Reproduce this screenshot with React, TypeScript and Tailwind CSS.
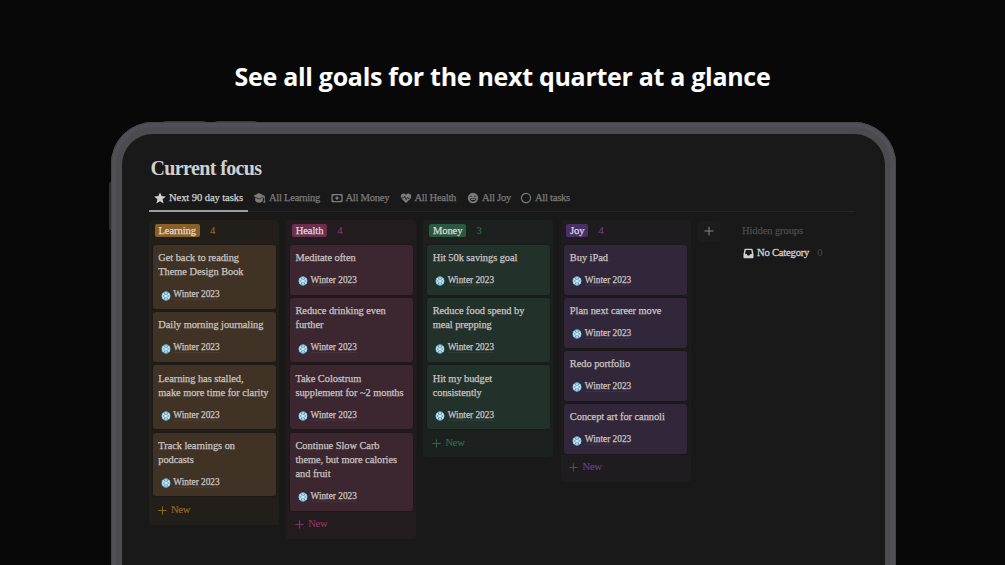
import React from 'react';
import { Plus } from 'lucide-react';

interface Task {
  lines: string[];
}

interface Column {
  name: string;
  count: number;
  tasks: Task[];
  panel: string;
  card: string;
  badge: string;
  accent: string;
}

const columns: Column[] = [
  {
    name: 'Learning',
    count: 4,
    panel: 'bg-[#221f1a]',
    card: 'bg-[#403325]',
    badge: 'bg-[#8a6029]',
    accent: 'text-[#8f6622]',
    tasks: [
      { lines: ['Get back to reading', 'Theme Design Book'] },
      { lines: ['Daily morning journaling'] },
      { lines: ['Learning has stalled,', 'make more time for clarity'] },
      { lines: ['Track learnings on', 'podcasts'] },
    ],
  },
  {
    name: 'Health',
    count: 4,
    panel: 'bg-[#231c1e]',
    card: 'bg-[#3c262f]',
    badge: 'bg-[#6d2f4e]',
    accent: 'text-[#85355f]',
    tasks: [
      { lines: ['Meditate often'] },
      { lines: ['Reduce drinking even', 'further'] },
      { lines: ['Take Colostrum', 'supplement for ~2 months'] },
      { lines: ['Continue Slow Carb', 'theme, but more calories', 'and fruit'] },
    ],
  },
  {
    name: 'Money',
    count: 3,
    panel: 'bg-[#1c201e]',
    card: 'bg-[#23312b]',
    badge: 'bg-[#2a593f]',
    accent: 'text-[#2c6b48]',
    tasks: [
      { lines: ['Hit 50k savings goal'] },
      { lines: ['Reduce food spend by', 'meal prepping'] },
      { lines: ['Hit my budget', 'consistently'] },
    ],
  },
  {
    name: 'Joy',
    count: 4,
    panel: 'bg-[#1f1c20]',
    card: 'bg-[#32273a]',
    badge: 'bg-[#4b2f68]',
    accent: 'text-[#643c87]',
    tasks: [
      { lines: ['Buy iPad'] },
      { lines: ['Plan next career move'] },
      { lines: ['Redo portfolio'] },
      { lines: ['Concept art for cannoli'] },
    ],
  },
];

const StarIcon = () => (
  <svg viewBox="0 0 12 12" className="h-3 w-3" fill="currentColor">
    <path d="M6 .4 7.600 4.100l4.200.4-3.200 2.800 1 4.200L6 9.300l-3.600 2.200 1-4.200L.2 4.500l4.200-.4Z" />
  </svg>
);

const CapIcon = () => (
  <svg viewBox="0 0 13 12" className="h-3 w-[13px]" fill="currentColor">
    <path d="M6 1 .4 3.900 6 6.800l4.400-2.200v.5L6 7.500 2.200 5.600v3.100C3 10 4.300 10.700 6 10.700S9 10 9.800 8.700V6.200L11 5.500v2.700c-.5.8-.6 1.600-.5 2.500h1.800c.1-.9 0-1.700-.5-2.500V3.900Z" />
  </svg>
);

const MoneyIcon = () => (
  <svg viewBox="0 0 12 12" className="h-3 w-3">
    <rect x="1" y="2.600" width="10" height="7" rx=".6" fill="none" stroke="currentColor" strokeWidth="1.300" />
    <circle cx="6" cy="6.100" r="1.600" fill="currentColor" />
    <path d="M1.500 3h1.700L1.500 4.700ZM10.500 3v1.700L8.800 3ZM1.500 9.200V7.500l1.700 1.700ZM10.500 9.200H8.800l1.700-1.700Z" fill="currentColor" />
  </svg>
);

const HeartIcon = () => (
  <svg viewBox="0 0 12 12" className="h-3 w-3">
    <path d="M6 11 1.600 6.700C.3 5.300.5 3.100 1.900 2.100 3.300 1.100 5 1.500 6 2.900c1-1.400 2.700-1.800 4.100-.8 1.400 1 1.600 3.200.3 4.600Z" fill="currentColor" />
    <path d="M1 6h2.500l1-1.900 1.600 3.600 1.300-2.400.6.900h1.600" fill="none" stroke="#191919" strokeWidth=".8" />
  </svg>
);

const SmileIcon = () => (
  <svg viewBox="0 0 12 12" className="h-3 w-3">
    <circle cx="6" cy="6" r="5.200" fill="currentColor" />
    <path d="M2.900 6.500h6.200C9 8.500 7.700 9.500 6 9.500S3 8.500 2.900 6.500Z" fill="#191919" />
    <path d="M4 7.500h4" stroke="currentColor" strokeWidth="1" />
    <path d="M3 4.700c.5-.8 1.300-.8 1.800 0M7.200 4.700c.5-.8 1.300-.8 1.800 0" fill="none" stroke="#191919" strokeWidth=".8" />
  </svg>
);

const CircleIcon = () => (
  <svg viewBox="0 0 12 12" className="h-3 w-3">
    <circle cx="6" cy="6" r="4.600" fill="none" stroke="currentColor" strokeWidth="1.200" />
  </svg>
);

const InboxIcon = () => (
  <svg viewBox="0 0 12 12" className="h-[11px] w-[11px]">
    <path
      fillRule="evenodd"
      d="M2.600.8h6.800c.6 0 1 .3 1.100.9L11.500 7v3.200c0 .6-.4 1-1 1h-9c-.6 0-1-.4-1-1V7l1-5.300c.1-.6.500-.9 1.100-.9ZM3 2.200 2.200 6.500h1.900c.2 1.200.9 1.800 1.900 1.800s1.700-.6 1.900-1.800h1.900L9 2.200Z"
      fill="currentColor"
    />
  </svg>
);

const Snowflake = () => (
  <svg viewBox="0 0 20 20" className="h-[10px] w-[10px]">
    <g fill="none" stroke="#4f9abf" strokeWidth="3.800" strokeLinecap="round">
      {[0, 60, 120, 180, 240, 300].map((angle) => (
        <path key={angle} d="M10 10V2.500M7.300 3.200l2.700 2.600 2.700-2.600" transform={`rotate(${angle} 10 10)`} />
      ))}
    </g>
    <g fill="none" stroke="#dcf3fc" strokeWidth="1.500" strokeLinecap="round">
      {[0, 60, 120, 180, 240, 300].map((angle) => (
        <path key={angle} d="M10 10V1.500M7.600 3l2.400 2.300 2.400-2.300" transform={`rotate(${angle} 10 10)`} />
      ))}
    </g>
  </svg>
);

const tabs = [
  { label: 'Next 90 day tasks', icon: StarIcon, box: 'w-[99px] pl-[5px] tracking-[-0.100px]' },
  { label: 'All Learning', icon: CapIcon, box: 'w-[78px] pl-[5px]' },
  { label: 'All Money', icon: MoneyIcon, box: 'w-[69px] pl-[4.500px]' },
  { label: 'All Health', icon: HeartIcon, box: 'w-[68px] pl-[4.500px]' },
  { label: 'All Joy', icon: SmileIcon, box: 'w-[53px] pl-[4px]' },
  { label: 'All tasks', icon: CircleIcon, box: 'w-[60px] pl-[4px]' },
];

const TaskCard: React.FC<{ task: Task; color: string }> = ({ task, color }) => (
  <div className={`rounded-[3px] pt-[6.200px] pb-[8px] pl-[5.800px] shadow-[0_0_1px_1px_rgba(15,15,15,0.2)] ${color}`}>
    <div className="text-[10.400px] leading-[14.200px] tracking-[-0.050px] whitespace-nowrap text-[#c9c4c2] [-webkit-text-stroke:0.25px]">
      {task.lines.map((line) => (
        <div key={line}>{line}</div>
      ))}
    </div>
    <div className="mt-[9.200px] flex h-3 items-center gap-[2.500px] pl-[2.500px]">
      <span className="mt-[1.500px]"><Snowflake /></span>
      <span className="border-b border-white/5 text-[9.300px] leading-[10px] text-[#c9c4c2] [-webkit-text-stroke:0.25px]">
        Winter 2023
      </span>
    </div>
  </div>
);

const BoardColumn: React.FC<{ column: Column }> = ({ column }) => (
  <div className={`w-[130px] shrink-0 rounded-[4px] px-[3.500px] ${column.panel}`}>
    <div className="flex h-[25.300px] items-center gap-[10px] pb-[3.500px] pl-[2px] text-[10.600px] tracking-[-0.100px]">
      <span className={`rounded-[2px] px-1 leading-[13.500px] text-[#dedad7] [-webkit-text-stroke:0.25px] ${column.badge}`}>
        {column.name}
      </span>
      <span className={`leading-[13px] [-webkit-text-stroke:0.2px] ${column.accent}`}>{column.count}</span>
    </div>
    <div className="flex flex-col gap-[3.500px]">
      {column.tasks.map((task) => (
        <TaskCard key={task.lines[0]} task={task} color={column.card} />
      ))}
    </div>
    <div className={`flex h-[28.200px] items-center gap-[2.500px] pl-[3px] text-[10.600px] tracking-[-0.300px] ${column.accent}`}>
      <Plus size={13} strokeWidth={1.800} />
      <span className="pb-px [-webkit-text-stroke:0.2px]">New</span>
    </div>
  </div>
);

const App: React.FC = () => {
  return (
    <div className="relative h-[565px] w-[1005px] overflow-hidden bg-[#080808]">
      <h1 className="pt-[58px] text-center font-['Open_Sans',sans-serif] text-[25px] leading-[36px] font-bold tracking-[-0.300px] text-white">
        See all goals for the next quarter at a glance
      </h1>

      {/* Hardware buttons on the tablet edge */}
      <div className="absolute top-[120.500px] left-[162px] h-2 w-[45px] rounded-t-sm bg-[#3a3a3e]" />
      <div className="absolute top-[120.500px] left-[214px] h-2 w-[44px] rounded-t-sm bg-[#3a3a3e]" />
      <div className="absolute top-[181px] left-[108.500px] h-[50px] w-1 rounded-l-sm bg-[#2d2d30]" />

      <div className="relative mt-[28px] ml-[110.500px] h-[500px] w-[785.500px] rounded-t-[42px] bg-[#4b4b50] px-[11px] pt-[12px] shadow-[inset_0_0_0_1px_#45454a,inset_0_0_0_5px_#505056]">
        <div className="h-full rounded-t-[31px] bg-[#191919] pt-[22px] pl-[27.500px] font-['Liberation_Serif',serif]">
          <h2 className="pl-[1.500px] text-[20px] leading-[24px] font-bold tracking-[-0.620px] text-[#d0d0d0]">Current focus</h2>

          <div className="mt-[4px] flex h-[28px] w-[706px] border-b border-[#252525] text-[10.600px] tracking-[-0.280px] text-[#7b7b7b]">
            {tabs.map(({ label, icon: Icon, box }, index) => (
              <div
                key={label}
                className={`flex h-[28px] shrink-0 items-center gap-[3px] pt-px whitespace-nowrap [-webkit-text-stroke:0.25px] ${box} ${index === 0 ? 'border-b-2 border-[#9b9b9b] text-[#d0d0d0]' : 'pb-[2px]'}`}
              >
                <Icon />
                <span>{label}</span>
              </div>
            ))}
          </div>

          <div className="mt-[7.700px] flex items-start gap-[7.200px]">
            {columns.map((column) => (
              <BoardColumn key={column.name} column={column} />
            ))}
            <div className="mt-[1px] flex h-[21px] w-[23px] items-center justify-center rounded-[3px] bg-[#1c1c1c] text-[#858585]">
              <Plus size={14} strokeWidth={1.800} />
            </div>
            <div className="pl-[14px] text-[10.600px] leading-[22.500px] tracking-[-0.120px] whitespace-nowrap">
              <div className="text-[#4b4b4b] [-webkit-text-stroke:0.25px]">Hidden groups</div>
              <div className="flex items-center gap-[3px] pl-[1px] text-[#d0d0d0]">
                <InboxIcon />
                <span className="tracking-[-0.200px] [-webkit-text-stroke:0.300px]">No Category</span>
                <span className="pl-[5px] text-[#4b4b4b]">0</span>
              </div>
            </div>
          </div>
        </div>
      </div>
    </div>
  );
};

export default App;
